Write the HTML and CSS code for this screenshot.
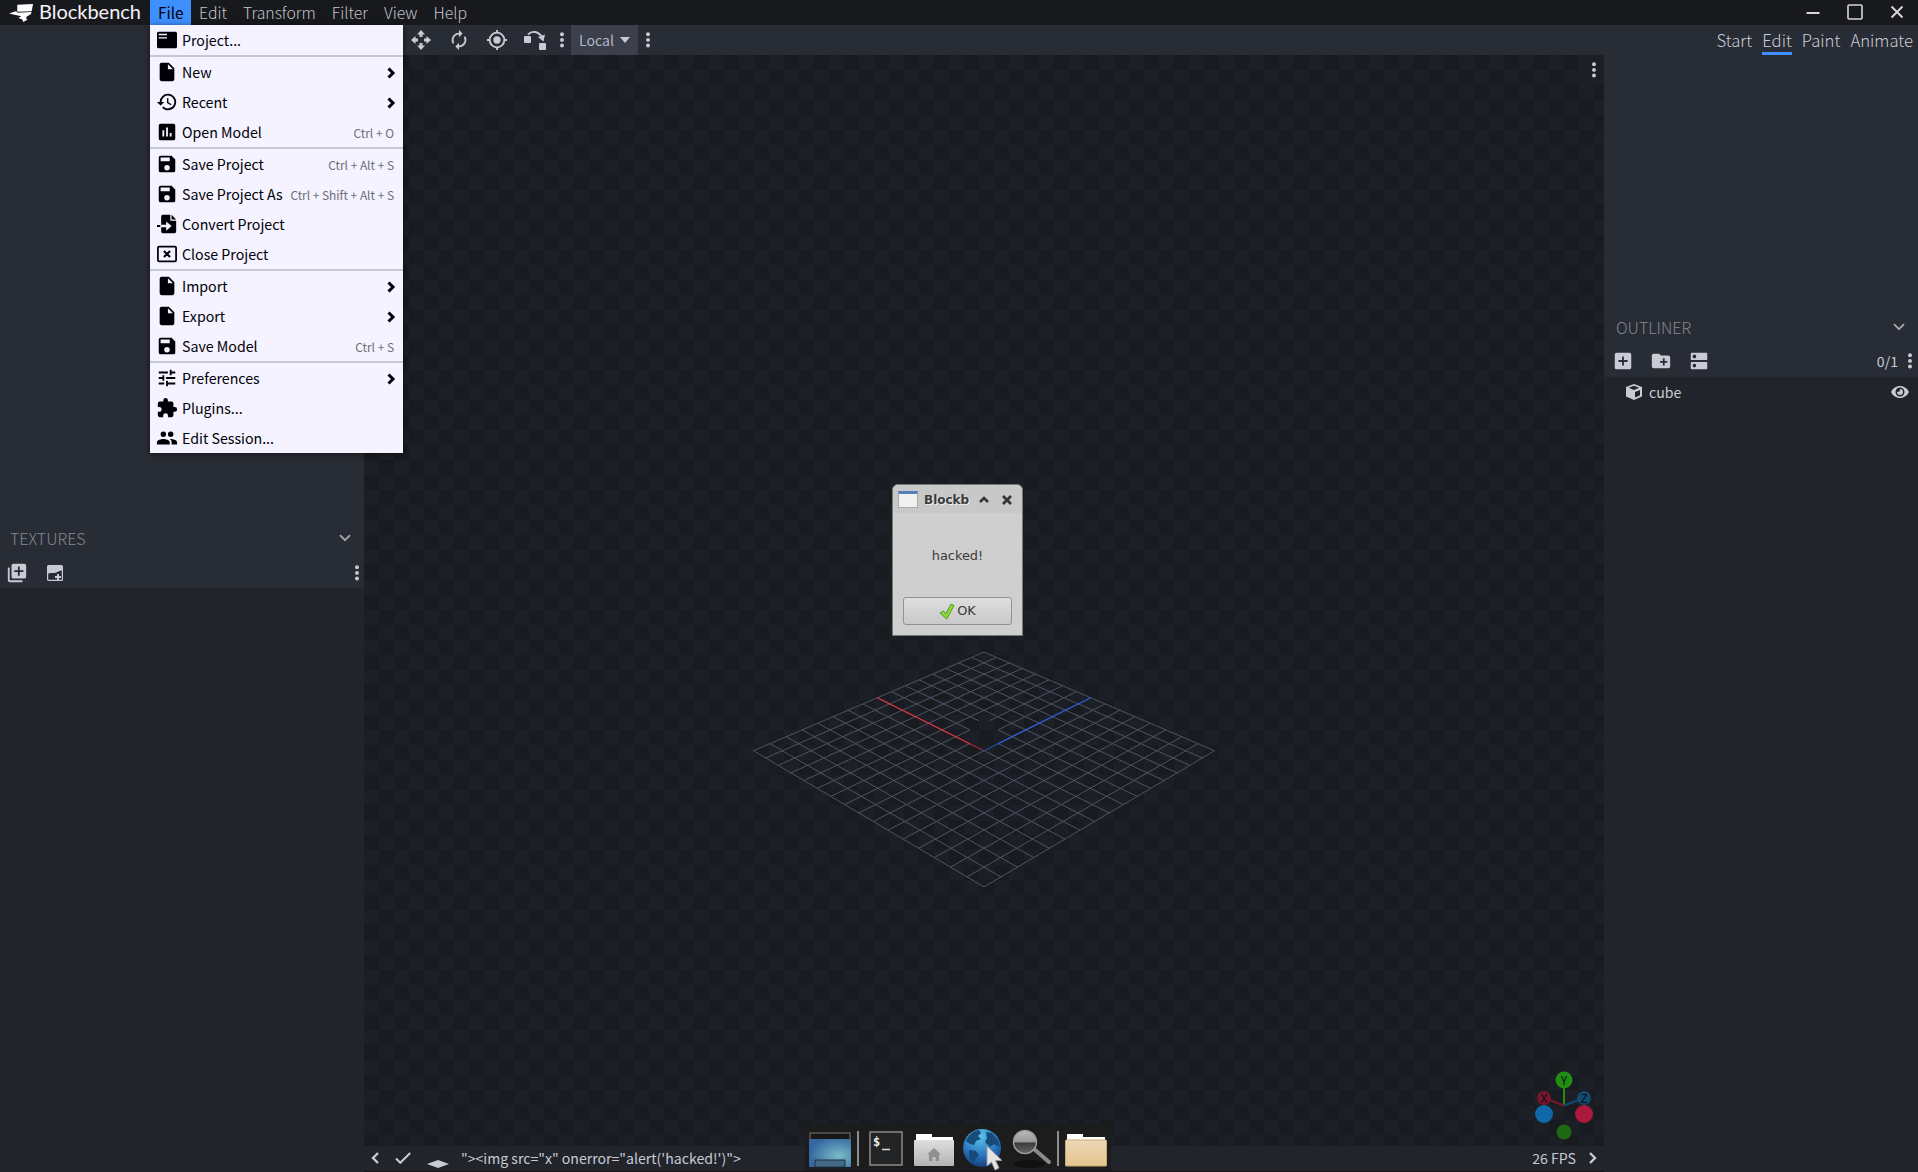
FILE: index.html
```html
<!DOCTYPE html>
<html lang="en">
<head>
<meta charset="utf-8">
<title>Blockbench</title>
<link rel="stylesheet" href="styles.css">
</head>
<body>
<svg class="defs" aria-hidden="true">
  <symbol id="i-file" viewBox="0 0 24 24"><path fill-rule="evenodd" d="M6 2a2 2 0 0 0-2 2v16a2 2 0 0 0 2 2h12a2 2 0 0 0 2-2V8l-6-6zm7 7V3.500L18.500 9z"/></symbol>
  <symbol id="i-featured" viewBox="0 0 24 24"><path fill-rule="evenodd" d="M22 2H2a2 2 0 0 0-2 2v16a2 2 0 0 0 2 2h20a2 2 0 0 0 2-2V4a2 2 0 0 0-2-2zM12 10.300H2V8.700h10zM12 6.300H2V4.500h10z"/></symbol>
  <symbol id="i-history" viewBox="0 0 24 24"><path d="M13 3a9 9 0 0 0-9 9H1l3.890 3.890.070.140L9 12H6a7 7 0 1 1 2.060 4.940l-1.420 1.420A9 9 0 1 0 13 3zm-1 5v5l4.280 2.540.720-1.210-3.500-2.080V8z"/></symbol>
  <symbol id="i-poll" viewBox="0 0 24 24"><path d="M19 3H5a2 2 0 0 0-2 2v14a2 2 0 0 0 2 2h14a2 2 0 0 0 2-2V5a2 2 0 0 0-2-2zM9 17H7v-7h2zm4 0h-2V7h2zm4 0h-2v-4h2z"/></symbol>
  <symbol id="i-save" viewBox="0 0 24 24"><path d="M17 3H5a2 2 0 0 0-2 2v14a2 2 0 0 0 2 2h14a2 2 0 0 0 2-2V7zm-5 16a3 3 0 1 1 0-6 3 3 0 0 1 0 6zm3-10H5V5h10z"/></symbol>
  <symbol id="i-convert" viewBox="0 0 24 24"><path fill-rule="evenodd" d="M7 1h9v7h7v13a2 2 0 0 1-2 2H7a2 2 0 0 1-2-2v-5h6v4l6.500-5.500L11 9v4H5V3a2 2 0 0 1 2-2z"/><path d="M17.500 1l5.500 5.500h-5.500zM0 13.200h4v2.500H0z"/></symbol>
  <symbol id="i-close-project" viewBox="0 0 24 24"><rect x="1.100" y="3.100" width="21.800" height="17.800" rx="1.500" fill="none" stroke="currentColor" stroke-width="2.100"/><path d="M8.300 8.300l7.400 7.400M15.700 8.300l-7.400 7.400" stroke="currentColor" stroke-width="2.500"/></symbol>
  <symbol id="i-tune" viewBox="0 0 24 24"><path d="M3 17v2h6v-2zM3 5v2h10V5zm10 16v-2h8v-2h-8v-2h-2v6zM7 9v2H3v2h4v2h2V9zm14 4v-2H11v2zm-6-4h2V7h4V5h-4V3h-2z"/></symbol>
  <symbol id="i-plugin" viewBox="0 0 24 24"><path d="M20.500 11H19V7a2 2 0 0 0-2-2h-4V3.500a2.500 2.500 0 0 0-5 0V5H4a2 2 0 0 0-2 2v3.800h1.500a2.700 2.700 0 0 1 0 5.400H2V20a2 2 0 0 0 2 2h3.800v-1.500a2.700 2.700 0 0 1 5.400 0V22H17a2 2 0 0 0 2-2v-4h1.500a2.500 2.500 0 0 0 0-5z"/></symbol>
  <symbol id="i-people" viewBox="0 0 24 24"><path d="M16 11a3 3 0 1 0 0-6 3 3 0 0 0 0 6zm-8 0a3 3 0 1 0 0-6 3 3 0 0 0 0 6zm0 2c-2.330 0-7 1.170-7 3.500V19h14v-2.500C15 14.170 10.330 13 8 13zm8 0c-.290 0-.620.020-.970.050 1.160.840 1.970 1.970 1.970 3.450V19h6v-2.500c0-2.330-4.670-3.500-7-3.500z"/></symbol>
  <symbol id="i-chev-right" viewBox="0 0 12 14"><path d="M3 2l5 5-5 5" fill="none" stroke="currentColor" stroke-width="2.400"/></symbol>
  <symbol id="i-chev-bold" viewBox="0 0 12 14"><path d="M3.500 2.500L8 7l-4.500 4.500" fill="none" stroke="currentColor" stroke-width="3"/></symbol>
  <symbol id="i-chev-down" viewBox="0 0 12 8"><path d="M1 1.200l5 5 5-5" fill="none" stroke="currentColor" stroke-width="1.800"/></symbol>
  <symbol id="i-dots" viewBox="0 0 6 16"><circle cx="3" cy="2.300" r="1.950"/><circle cx="3" cy="7.900" r="1.950"/><circle cx="3" cy="13.500" r="1.950"/></symbol>
  <symbol id="i-move" viewBox="0 0 20 20"><path d="M10 0l4 4.500h-2.500V7h-3V4.500H6zM10 20l-4-4.500h2.500V13h3v2.500H14zM0 10l4.500-4v2.500H7v3H4.500V14zM20 10l-4.500 4v-2.500H13v-3h2.500V6z"/></symbol>
  <symbol id="i-rotate" viewBox="0 0 24 24"><path d="M12 6v3l4-4-4-4v3a8 8 0 0 0-6.760 12.260L6.700 14.800A6 6 0 0 1 12 6zm6.760 1.740L17.300 9.200A6 6 0 0 1 12 18v-3l-4 4 4 4v-3a8 8 0 0 0 6.760-12.260z"/></symbol>
  <symbol id="i-pivot" viewBox="0 0 24 24"><path d="M12 8a4 4 0 1 0 0 8 4 4 0 0 0 0-8zm8.940 3A9 9 0 0 0 13 3.060V1h-2v2.060A9 9 0 0 0 3.060 11H1v2h2.060A9 9 0 0 0 11 20.940V23h2v-2.060A9 9 0 0 0 20.940 13H23v-2zM12 19a7 7 0 1 1 0-14 7 7 0 0 1 0 14z"/></symbol>
  <symbol id="i-vertex" viewBox="0 0 22 20"><rect x="0" y="6" width="7" height="7" rx="1"/><rect x="15" y="13" width="7" height="7" rx="1"/><path d="M4 4.500C8 .500 14 1 18 7" fill="none" stroke="currentColor" stroke-width="1.800"/><path d="M21 4.500l-1.500 7-5.500-4.500z"/></symbol>
  <symbol id="i-add-box" viewBox="0 0 24 24"><path d="M19 3H5a2 2 0 0 0-2 2v14a2 2 0 0 0 2 2h14a2 2 0 0 0 2-2V5a2 2 0 0 0-2-2zm-2 10h-4v4h-2v-4H7v-2h4V7h2v4h4z"/></symbol>
  <symbol id="i-add-folder" viewBox="0 0 24 24"><path d="M20 6h-8l-2-2H4a2 2 0 0 0-2 2v12a2 2 0 0 0 2 2h16a2 2 0 0 0 2-2V8a2 2 0 0 0-2-2zm-1 8h-3v3h-2v-3h-3v-2h3V9h2v3h3z"/></symbol>
  <symbol id="i-dns" viewBox="0 0 24 24"><path d="M20 13H4a1 1 0 0 0-1 1v6a1 1 0 0 0 1 1h16a1 1 0 0 0 1-1v-6a1 1 0 0 0-1-1zM7 19a2 2 0 1 1 0-4 2 2 0 0 1 0 4zM20 3H4a1 1 0 0 0-1 1v6a1 1 0 0 0 1 1h16a1 1 0 0 0 1-1V4a1 1 0 0 0-1-1zM7 9a2 2 0 1 1 0-4 2 2 0 0 1 0 4z"/></symbol>
  <symbol id="i-library-add" viewBox="0 0 24 24"><path d="M4 6H2v14a2 2 0 0 0 2 2h14v-2H4zm16-4H8a2 2 0 0 0-2 2v12a2 2 0 0 0 2 2h12a2 2 0 0 0 2-2V4a2 2 0 0 0-2-2zm-1 9h-4v4h-2v-4H9V9h4V5h2v4h4z"/></symbol>
  <symbol id="i-new-texture" viewBox="0 0 16 16"><rect x=".600" y=".600" width="14.800" height="14.800" rx="1" fill="none" stroke="currentColor" stroke-width="1.200"/><path d="M1 1h14v4.500c-3-.500-5 2.500-8 2.500-2.500 0-4-.500-6 .500zM10 9h2v2h2v2h-2v2h-2v-2H8v-2h2z"/></symbol>
  <symbol id="i-cube" viewBox="0 0 16 16"><path fill-rule="evenodd" d="M8 0l8 3v9.500L8 16l-8-3.500V3zM8 1.800L2.800 3.800 8 6l5.200-2.200zM9 8v5.500l5-2.200V6z"/></symbol>
  <symbol id="i-eye" viewBox="0 0 18 12"><path fill-rule="evenodd" d="M9 0c4 0 7.200 2.500 9 6-1.800 3.500-5 6-9 6S1.800 9.500 0 6c1.800-3.500 5-6 9-6zm0 1.500a4.500 4.500 0 1 0 0 9 4.500 4.500 0 0 0 0-9z"/><path d="M9 3a3 3 0 1 1-3 3l2.500-.500z"/></symbol>
</svg>

<header class="titlebar">
  <div class="brand">
    <svg class="brand-mark" viewBox="0 0 24 18"><path d="M8.300.700L24 0l-1.300 7.300-14.500.500zM0 9.500l7-2.200 1.500 1.500 14-.800-.700 2.300-4 2.200-.700 2 1.300 1.300-4.200 2.200-.900-2.500-4-1.500 3-1.700z"/></svg>
    <svg class="brand-name" viewBox="0 0 101 20"><text x="-1" y="15" textLength="102" lengthAdjust="spacingAndGlyphs">Blockbench</text></svg>
  </div>
  <nav class="menubar">
    <span class="open">File</span><span>Edit</span><span>Transform</span><span>Filter</span><span>View</span><span>Help</span>
  </nav>
  <div class="window-buttons">
    <svg viewBox="0 0 14 14"><path d="M.500 8h13" stroke-width="2"/></svg>
    <svg viewBox="0 0 14 14"><rect x="0" y="0" width="14" height="14" rx="1" stroke-width="1.600"/></svg>
    <svg viewBox="0 0 14 14"><path d="M1.500 1.500l11 11M12.500 1.500l-11 11" stroke-width="1.900"/></svg>
  </div>
</header>

<main class="workspace">
  <aside class="left">
    <div class="panel-top spacer-left"></div>
    <section class="panel-top">
      <h2>TEXTURES <svg class="fold"><use href="#i-chev-down"/></svg></h2>
      <div class="tools textures-tools">
        <svg class="s22"><use href="#i-library-add"/></svg>
        <svg class="s16"><use href="#i-new-texture"/></svg>
        <svg class="dots"><use href="#i-dots"/></svg>
      </div>
    </section>
  </aside>

  <section class="center">
    <div class="toolbar">
      <svg class="s20"><use href="#i-move"/></svg>
      <svg class="s22"><use href="#i-rotate"/></svg>
      <svg class="s22"><use href="#i-pivot"/></svg>
      <svg class="vertex"><use href="#i-vertex"/></svg>
      <svg class="dots"><use href="#i-dots"/></svg>
      <span class="select">Local <i></i></span>
      <svg class="dots"><use href="#i-dots"/></svg>
    </div>
    <div class="viewport">
      <svg class="scene" id="scene" viewBox="364 55 1240 1091"></svg>
      <span class="view-menu"><svg class="dots"><use href="#i-dots"/></svg></span>
    </div>
    <footer class="status">
      <svg class="back"><use href="#i-chev-right"/></svg>
      <svg class="check" viewBox="0 0 16 12"><path d="M1 6.500l4.300 4.300L15.200 1"/></svg>
      <svg class="format" viewBox="0 0 22 8"><path d="M11 0l11 4-11 4L0 4z"/></svg>
      <span>"&gt;&lt;img src="x" onerror="alert('hacked!')"&gt;</span>
      <span class="fps">26 FPS</span>
      <svg class="next"><use href="#i-chev-right"/></svg>
    </footer>
  </section>

  <aside class="right">
    <nav class="modes"><span>Start</span><span class="active">Edit</span><span>Paint</span><span>Animate</span></nav>
    <div class="panel-top spacer-right"></div>
    <section class="panel-top">
      <h2 class="outliner">OUTLINER <svg class="fold"><use href="#i-chev-down"/></svg></h2>
      <div class="tools outliner-tools">
        <svg class="s22"><use href="#i-add-box"/></svg>
        <svg class="s22"><use href="#i-add-folder"/></svg>
        <svg class="s22"><use href="#i-dns"/></svg>
        <span class="count">0/1</span>
        <svg class="dots"><use href="#i-dots"/></svg>
      </div>
    </section>
    <div class="node"><svg class="s16"><use href="#i-cube"/></svg><span>cube</span><svg class="eye"><use href="#i-eye"/></svg></div>
  </aside>
</main>

<ul class="file-menu">
  <li><svg><use href="#i-featured"/></svg>Project...</li>
  <li class="sep"></li>
  <li><svg class="wide"><use href="#i-file"/></svg>New<svg class="more"><use href="#i-chev-bold"/></svg></li>
  <li><svg class="wide"><use href="#i-history"/></svg>Recent<svg class="more"><use href="#i-chev-bold"/></svg></li>
  <li><svg class="wide"><use href="#i-poll"/></svg>Open Model<kbd>Ctrl + O</kbd></li>
  <li class="sep"></li>
  <li><svg class="wide"><use href="#i-save"/></svg>Save Project<kbd>Ctrl + Alt + S</kbd></li>
  <li><svg class="wide"><use href="#i-save"/></svg>Save Project As<kbd>Ctrl + Shift + Alt + S</kbd></li>
  <li><svg><use href="#i-convert"/></svg>Convert Project</li>
  <li><svg><use href="#i-close-project"/></svg>Close Project</li>
  <li class="sep"></li>
  <li><svg class="wide"><use href="#i-file"/></svg>Import<svg class="more"><use href="#i-chev-bold"/></svg></li>
  <li><svg class="wide"><use href="#i-file"/></svg>Export<svg class="more"><use href="#i-chev-bold"/></svg></li>
  <li><svg class="wide"><use href="#i-save"/></svg>Save Model<kbd>Ctrl + S</kbd></li>
  <li class="sep"></li>
  <li><svg class="wide"><use href="#i-tune"/></svg>Preferences<svg class="more"><use href="#i-chev-bold"/></svg></li>
  <li><svg class="wide"><use href="#i-plugin"/></svg>Plugins...</li>
  <li><svg class="wide"><use href="#i-people"/></svg>Edit Session...</li>
</ul>

<div class="dialog">
  <div class="dialog-title">
    <span class="app-icon"></span>
    <b>Blockb</b>
    <svg class="shade" viewBox="0 0 10 7"><path d="M1 6l4-4 4 4"/></svg>
    <svg class="close" viewBox="0 0 10 10"><path d="M1 1l8 8M9 1L1 9"/></svg>
  </div>
  <p>hacked!</p>
  <button><svg viewBox="0 0 16 17"><path d="M1 10l3.500-2 2.300 3L12 1.200l3 1.300L7.700 16z" fill="#8ddb3a" stroke="#4f9a1c" stroke-width="1"/></svg>OK</button>
</div>

<div class="dock">
  <svg width="42" height="36" viewBox="0 0 42 36">
    <defs><radialGradient id="desk" cx=".7" cy=".6" r=".7"><stop offset="0" stop-color="#79bcc9"/><stop offset="1" stop-color="#3566a0"/></radialGradient></defs>
    <rect x="1" y="1" width="40" height="8" fill="#181818" stroke="#777"/><rect y="7" width="42" height="28" rx="1" fill="url(#desk)"/><path d="M6 35v-7h30v7z" fill="#426a84" stroke="#1d2f40"/>
  </svg>
  <i class="divider"></i>
  <svg class="term" width="34" height="36" viewBox="0 0 34 36"><rect x="1" y="1" width="32" height="33" fill="#232425" stroke="#8a8a8a" stroke-width="1.500"/><text x="4" y="15">$</text><path d="M13 18.500h8" stroke="#ddd" stroke-width="1.500"/></svg>
  <svg class="home" width="40" height="36" viewBox="0 0 40 36">
    <defs><linearGradient id="grey" x2="0" y2="1"><stop offset="0" stop-color="#dedede"/><stop offset="1" stop-color="#b4b4b4"/></linearGradient></defs>
    <path d="M2 9V2h16v3h21v4z" fill="#fff"/><rect y="8" width="40" height="26" rx="1" fill="url(#grey)"/><path d="M20 16l7 6.500h-2V29h-3.500v-4h-3v4H15v-6.500h-2z" fill="#8f8f8f"/>
  </svg>
  <svg class="globe" width="40" height="44" viewBox="0 0 40 44">
    <defs><radialGradient id="sea" cx=".45" cy=".2" r=".8"><stop offset="0" stop-color="#5bc4ea"/><stop offset=".6" stop-color="#2b78bf"/><stop offset="1" stop-color="#173f80"/></radialGradient></defs>
    <circle cx="19" cy="20" r="19" fill="url(#sea)"/><path d="M3 13C5 7 10 3 16 2l2 3-3 3 3 3-5 2-2 4-4-1zm20-9l6 1 6 7 2 7-6-3-4 3-5-5 2-4zM6 22l7 1 3 4-4 5-2 4-4-7z" fill="#174b79"/><path d="M24 18v20l4.500-4 3.500 8 4-2-3.500-7.500H39z" fill="#e4e4e4" stroke="#999"/>
  </svg>
  <svg class="glass" width="40" height="40" viewBox="0 0 40 40">
    <defs><linearGradient id="lens" x2="0" y2="1"><stop offset="0" stop-color="#bbb"/><stop offset=".48" stop-color="#999"/><stop offset=".55" stop-color="#3c3c3c"/><stop offset="1" stop-color="#666"/></linearGradient></defs>
    <ellipse cx="18" cy="35" rx="16" ry="4" fill="#111"/><path d="M22 20l15 13" stroke="#8a8a8a" stroke-width="4" stroke-linecap="round"/><circle cx="13" cy="13" r="11.500" fill="url(#lens)" stroke="#9a9a9a" stroke-width="1.500"/>
  </svg>
  <i class="divider second"></i>
  <svg class="folder" width="42" height="36" viewBox="0 0 42 36">
    <defs><linearGradient id="tan" x2="0" y2="1"><stop offset="0" stop-color="#ecd8b6"/><stop offset="1" stop-color="#e5c48e"/></linearGradient></defs>
    <path d="M2 9V2h16v3h22v4z" fill="#fff"/><rect x=".500" y="8" width="41" height="26" rx="1" fill="url(#tan)" stroke="#c9ab79"/>
  </svg>
</div>
<script src="scene.js"></script>
</body>
</html>
```
FILE: styles.css
```css
* { box-sizing: border-box; }
html, body { height: 100%; }
body {
  margin: 0;
  display: flex;
  flex-direction: column;
  position: relative;
  overflow: hidden;
  background: #21252b;
  color: #cacad4;
  font: 14.1px/20px "Noto Sans CJK SC", sans-serif;
}
svg { display: block; flex: none; fill: currentColor; }
.defs { position: absolute; width: 0; height: 0; }

.titlebar { height: 25px; display: flex; background: #18191d; }
.brand { width: 150px; padding: 4px 0 0 9px; display: flex; gap: 7px; color: #fff; }
.brand-mark { width: 24px; height: 18px; }
.brand-name { width: 101px; height: 20px; overflow: visible; }
.brand-name text { font: 18.5px Lato, sans-serif; fill: #f4f4f6; }
.menubar { display: flex; font-weight: 300; font-size: 15.8px; line-height: 25px; color: #c3c3cc; }
.menubar span { padding: 0 8px; white-space: nowrap; }
.menubar .open { background: #3e90ff; color: #000006; width: 41px; font-weight: 400; font-size: 15.4px; }
.window-buttons { margin-left: auto; display: flex; gap: 28px; padding: 5px 14px 0 0; color: #d5d5dd; }
.window-buttons svg { width: 14px; height: 14px; fill: none; stroke: currentColor; overflow: visible; }

.workspace { flex: 1; display: grid; grid-template-columns: 364px 1240px 314px; min-height: 0; }
.panel-top { background: #282c34; }
.spacer-left { height: 496px; }
.spacer-right { height: 255px; }
h2 { margin: 0; height: 34px; font-weight: 300; font-size: 16px; line-height: 34px; color: #848891; display: flex; align-items: center; justify-content: space-between; padding: 0 13px 0 10px; }
.outliner { padding-left: 12px; }
.fold { width: 12px; height: 8px; color: #a5a7b0; }
.tools { display: flex; align-items: center; height: 33px; }
.textures-tools { padding: 3px 4px 1px 6px; gap: 19px; }
.textures-tools .dots { margin-left: auto; }
.outliner-tools { padding: 1px 5px 0 8px; gap: 16px; }
.outliner-tools .dots { margin-left: -7px; }
.count { margin-left: auto; }
.s22 { width: 22px; height: 22px; }
.s20 { width: 20px; height: 20px; }
.s16 { width: 16px; height: 16px; }
.dots { width: 6px; height: 16px; }
.node { height: 30px; display: flex; align-items: center; padding: 0 9px 0 22px; gap: 7px; }
.eye { width: 18px; height: 12px; margin-left: auto; }

.center { display: flex; flex-direction: column; min-height: 0; }
.toolbar { height: 30px; background: #282c34; display: flex; align-items: center; padding-left: 47px; }
.toolbar .s20 { margin-right: 18px; }
.toolbar .s22 { margin: 0 17px 0 -1px; }
.vertex { width: 22px; height: 20px; margin-right: 13px; margin-left: -1px; }
.select { width: 67px; height: 30px; margin: 0 7px 0 6px; padding-left: 8px; background: #3c3f4c; display: flex; align-items: center; gap: 6px; color: #b4b5c0; }
.select i { border: 5px solid transparent; border-top: 6px solid #cacad4; border-bottom: 0; }
.viewport {
  height: 1091px;
  position: relative;
  background: repeating-conic-gradient(#1c1f26 0 25%, #181b1f 0 50%) 0 0 / 30px 30px;
}
.scene { width: 1240px; height: 1091px; }
.scene text { font: 12px "Noto Sans CJK SC", sans-serif; text-anchor: middle; fill: #0c1014; }
.view-menu { position: absolute; top: 0; right: 0; width: 26px; height: 30px; background: #1c1f26; padding: 7px 0 0 13px; }
.status { height: 26px; border-bottom: 1px solid #1c141b; display: flex; align-items: center; padding: 0 0 1px 5px; }
.back, .next { width: 12px; height: 14px; }
.back { transform: scaleX(-1); }
.check { width: 16px; height: 12px; margin: 0 16px 0 14px; fill: none; stroke: currentColor; stroke-width: 2; }
.format { width: 22px; height: 8px; margin: 12px 12px 0 0; }
.fps { margin-left: auto; margin-right: 11px; }
.next { margin-right: 5px; }

.modes { height: 30px; background: #282c34; display: flex; justify-content: flex-end; gap: 10px; padding-right: 5px; font-weight: 300; font-size: 16.7px; line-height: 31px; }
.modes span { height: 30px; }
.modes .active { border-bottom: 3px solid #3e90ff; }

.file-menu {
  position: absolute; left: 150px; top: 25px; width: 253px; margin: 0; padding: 0; list-style: none;
  background: #f4f3ff; color: #000006; box-shadow: 0 1px 6px rgba(0, 0, 0, .55);
  font-size: 14.2px;
}
.file-menu li { height: 30px; padding: 0 9px 0 7px; display: flex; align-items: center; gap: 5px; white-space: nowrap; }
.file-menu li > svg { width: 20px; height: 20px; }
.file-menu li > .wide { width: 22px; height: 22px; margin: 0 -1px; }
.file-menu .sep { height: 2px; background: #c8c8d3; }
.file-menu li > .more { width: 12px; height: 14px; margin: 2px -3px 0 auto; }
kbd { margin-left: auto; font: 11.9px/20px "Noto Sans CJK SC", sans-serif; color: #6c6d78; padding-top: 1px; }

.dialog {
  position: absolute; left: 892px; top: 484px; width: 131px; height: 152px;
  border: 1px solid #77787a; border-radius: 6px 6px 1px 1px; background: #cfcfcf; color: #3a3a3a;
  font: 12.9px/18px "DejaVu Sans", sans-serif; text-align: center;
}
.dialog-title { height: 28px; display: flex; align-items: center; padding: 1px 10px 0 5px; background: #c8c8c8; border-radius: 5px 5px 0 0; }
.app-icon { width: 20px; height: 17px; border: 1px solid #aaa; border-top: 3px solid #5580bd; background: #f1f1ef; }
.dialog-title b { width: 46px; overflow: hidden; font-size: 12px; margin-left: 6px; text-align: left; text-shadow: 1px 1px #eee; }
.dialog-title svg { fill: none; stroke: #333; stroke-width: 2.6; }
.shade { width: 10px; height: 7px; margin-left: 9px; }
.close { width: 10px; height: 10px; margin-left: auto; }
.dialog p { margin: 34px 0 0; }
.dialog button {
  margin: 32px auto 0; width: 109px; height: 28px; padding: 0; border: 1px solid #929292; border-radius: 3px;
  background: linear-gradient(#dedede, #c9c9c9); color: inherit; font: inherit;
  display: flex; align-items: center; justify-content: center; gap: 2px;
}
.dialog button svg { width: 16px; height: 17px; }

.dock { position: absolute; left: 805px; top: 1124px; width: 306px; height: 47px; padding: 5px 0 0 4px; background: #1c1c1c; display: flex; align-items: center; }
.divider { width: 2px; height: 35px; margin: 0 10px 4px 6px; background: #8d8d8d; }
.divider.second { margin: 0 6px 4px 5px; }
.term { margin: 0 11px 2px 0; }
.term text { font: bold 12px "DejaVu Sans Mono", monospace; fill: #eee; }
.globe, .glass { margin-left: 9px; }
.globe { margin-bottom: 1px; }
.glass { margin-bottom: 3px; }
```
FILE: scene.js
```
// Ground grid: 16 x 16 cells seen in perspective, with the X and Z axes from the centre.
const SIZE = 16;
const project = (u, v) => {
  const w = 1 - 0.1379 * (u + v);
  return [984 + 198.7 * (u - v) / w, (652.1 - 4.9 * (u + v)) / w];
};
const segment = (a, b) => 'M' + a.join(' ') + 'L' + b.join(' ');

let grid = '';
for (let i = 0; i <= SIZE; i++) {
  const t = i / SIZE;
  if (i === SIZE / 2) {
    grid += segment(project(t, t), project(t, 1)) + segment(project(t, t), project(1, t));
  } else {
    grid += segment(project(t, 0), project(t, 1)) + segment(project(0, t), project(1, t));
  }
}
const centre = project(0.5, 0.5);
const xEnd = project(0, 0.5);
const zEnd = project(0.5, 0);

const axis = (from, to, colour) => `<path d="${segment(from, to)}" stroke="${colour}" stroke-width="1.300"/>`;
const ball = (x, y, r, colour, label) =>
  `<circle cx="${x}" cy="${y}" r="${r}" fill="${colour}"/>` + (label ? `<text x="${x}" y="${y + 4.500}">${label}</text>` : '');

document.getElementById('scene').innerHTML = `
  <mask id="cube-mask"><rect x="364" y="55" width="1240" height="1091" fill="#fff"/>
    <path d="M969 730.500L979.500 720h9.500L999 730.500V744l-15 7.500-15-7.500z" fill="#000"/></mask>
  <path d="${grid}" fill="none" stroke="#4f5465" mask="url(#cube-mask)"/>
  ${axis(centre, xEnd, '#ea384c')}
  ${axis(centre, zEnd, '#2f62e6')}
  <path d="M970 743.500l14 7 14-7" fill="none" stroke="#1a1d23" stroke-opacity=".4" stroke-width="2"/>
  <path d="M1564 1105.500V1080" stroke="#238c12" stroke-width="2"/>
  <path d="M1564 1105.500L1544 1098" stroke="#7a1530" stroke-width="2"/>
  <path d="M1564 1105.500L1584 1098" stroke="#12496f" stroke-width="2"/>
  ${ball(1544, 1098, 7, '#7a1530', 'X')}
  ${ball(1584, 1098, 7, '#12496f', 'Z')}
  ${ball(1564, 1080, 8.5, '#238c12', 'Y')}
  ${ball(1564, 1132, 7.5, '#1c6913')}
  ${ball(1544, 1114, 9, '#0f69a8')}
  ${ball(1584, 1114, 9, '#ab1a3c')}`;
```
